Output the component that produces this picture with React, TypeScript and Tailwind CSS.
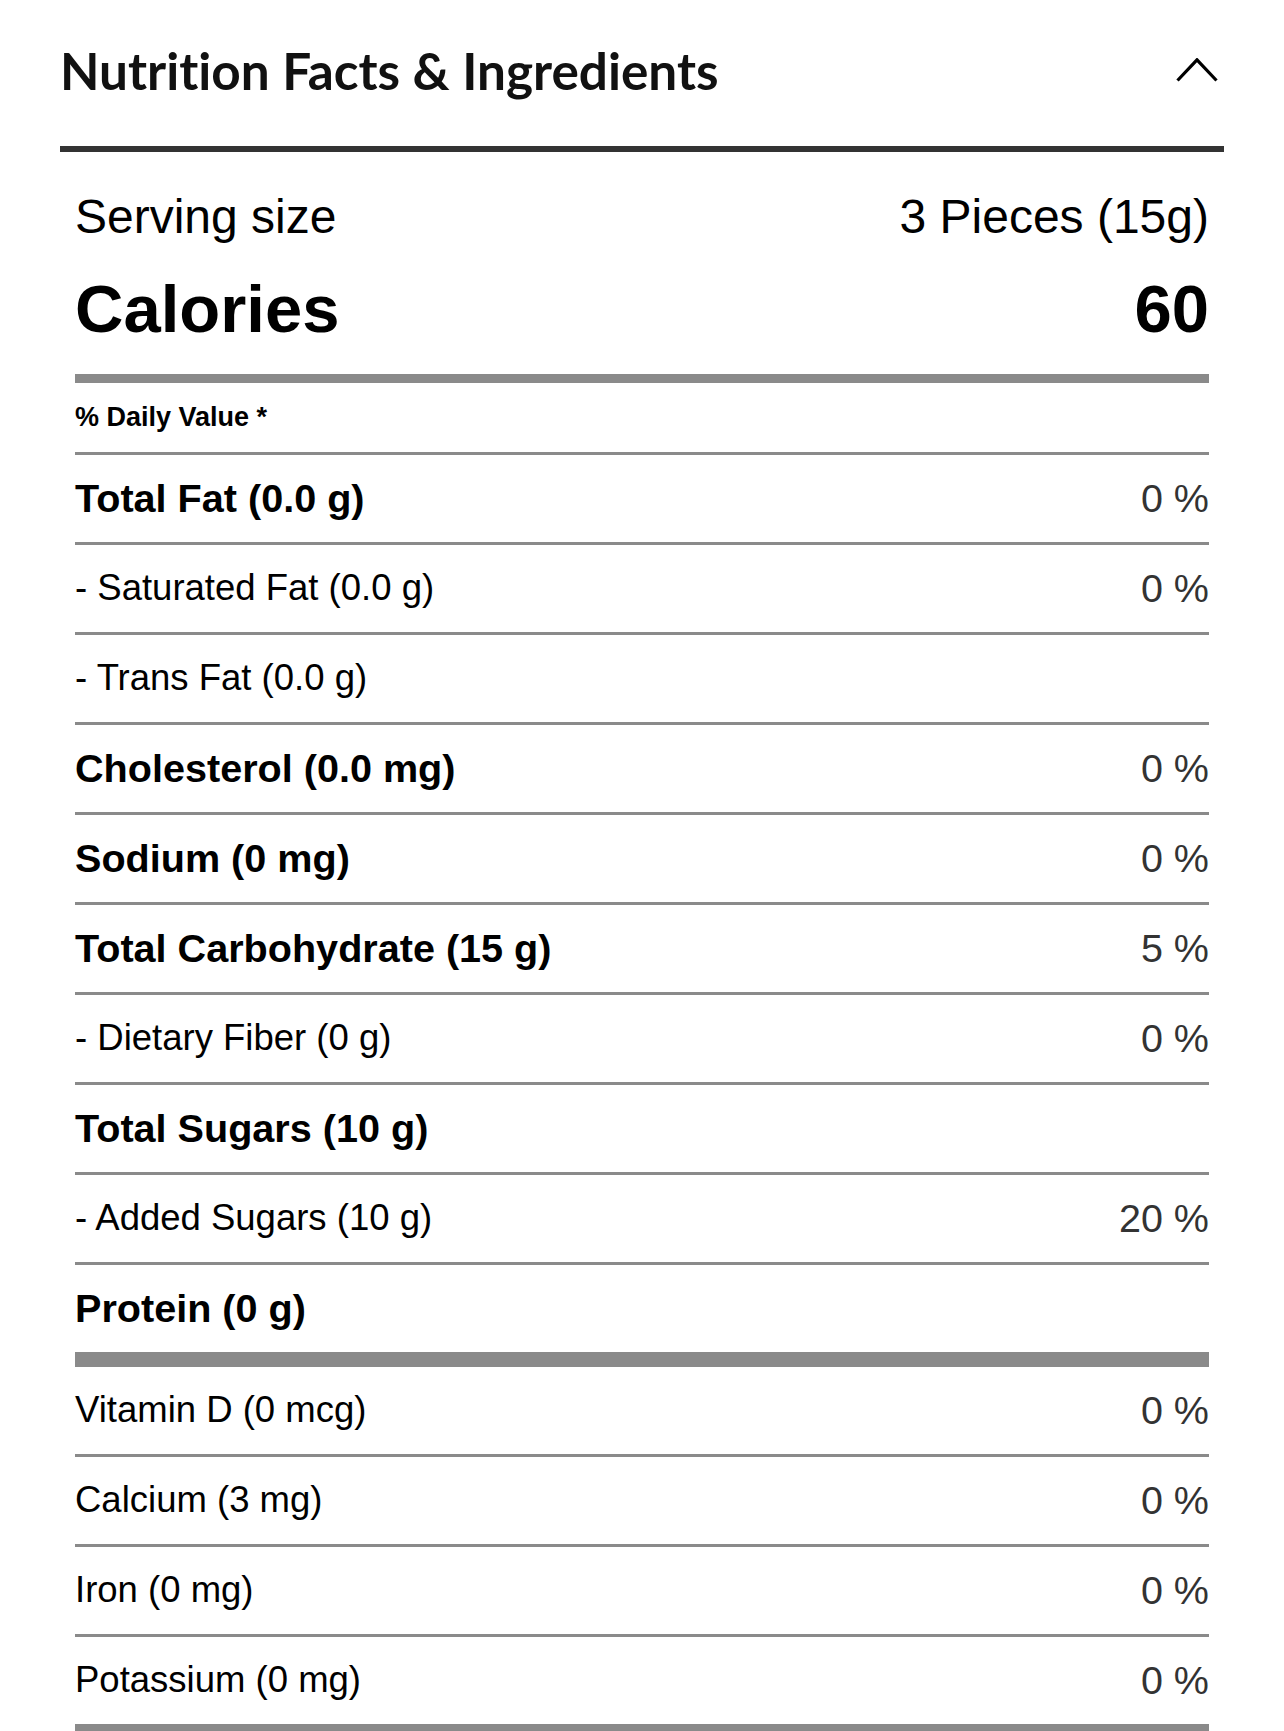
import React from "react";

type Row = { label: string; bold?: boolean; pct?: string; thick?: boolean };

const rows: Row[] = [
  { label: "Total Fat (0.0 g)", bold: true, pct: "0 %" },
  { label: "- Saturated Fat (0.0 g)", pct: "0 %" },
  { label: "- Trans Fat (0.0 g)" },
  { label: "Cholesterol (0.0 mg)", bold: true, pct: "0 %" },
  { label: "Sodium (0 mg)", bold: true, pct: "0 %" },
  { label: "Total Carbohydrate (15 g)", bold: true, pct: "5 %" },
  { label: "- Dietary Fiber (0 g)", pct: "0 %" },
  { label: "Total Sugars (10 g)", bold: true },
  { label: "- Added Sugars (10 g)", pct: "20 %" },
  { label: "Protein (0 g)", bold: true, thick: true },
  { label: "Vitamin D (0 mcg)", pct: "0 %" },
  { label: "Calcium (3 mg)", pct: "0 %" },
  { label: "Iron (0 mg)", pct: "0 %" },
  { label: "Potassium (0 mg)", pct: "0 %", thick: true },
];

export default function App() {
  return (
    <div className="min-h-screen bg-white px-[60px] font-['Liberation_Sans',Arial,sans-serif] text-black">
      <div className="flex h-[146px] items-center justify-between pb-[4px]">
        <h2 className="font-['Lato',sans-serif] text-[51.3px] font-bold leading-none text-[#111] [font-variant-ligatures:none]">
          Nutrition Facts &amp; Ingredients
        </h2>
        <svg
          width="42"
          height="24"
          viewBox="0 0 42 24"
          className="mb-[3px] mr-[6px]"
          fill="none"
          stroke="#000"
          strokeWidth="3.2"
        >
          <polyline points="1.5,22.5 21,1.8 40.5,22.5" />
        </svg>
      </div>
      <div className="h-[6px] bg-[#333]" />
      <div className="px-[15px] pt-[24px]">
        <div className="flex h-[82px] items-center justify-between text-[48px] leading-none">
          <span>Serving size</span>
          <span>3 Pieces (15g)</span>
        </div>
        <div className="flex h-[100px] items-center justify-between text-[67px] font-bold leading-none">
          <span>Calories</span>
          <span>60</span>
        </div>
        <div className="mt-[16px] h-[9px] bg-[#8a8a8a]" />
        <div className="flex h-[72px] items-center border-b-[3px] border-[#8a8a8a] text-[27px] font-bold leading-none">
          % Daily Value *
        </div>
        {rows.map((r) => (
          <div
            key={r.label}
            className={`flex items-center justify-between border-[#8a8a8a] ${
              r.thick ? "h-[102px] border-b-[15px]" : "h-[90px] border-b-[3px]"
            }`}
          >
            <span className={r.bold ? "text-[39.6px] font-bold leading-none" : "text-[36.5px] leading-none"}>
              {r.label}
            </span>
            {r.pct && <span className="text-[39.5px] leading-none text-[#333]">{r.pct}</span>}
          </div>
        ))}
      </div>
    </div>
  );
}
